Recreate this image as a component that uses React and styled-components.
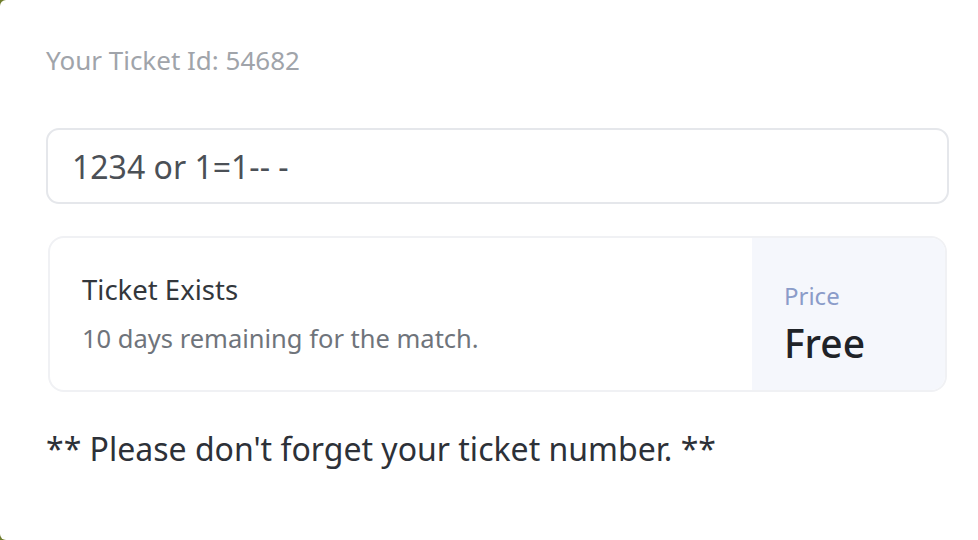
import React from "react";
import styled, { createGlobalStyle } from "styled-components";

const GlobalStyle = createGlobalStyle`
  html, body {
    margin: 0;
    padding: 0;
    background: #6f7d2c;
  }
  body {
    font-family: "Noto Sans", "Open Sans", sans-serif;
  }
`;

const Page = styled.div`
  width: 978px;
  height: 540px;
  background: #ffffff;
  border-radius: 6px 0 0 6px;
  box-sizing: border-box;
  padding: 43px 29px 0 46px;
  display: flex;
  flex-direction: column;
`;

const TicketLabel = styled.div`
  font-size: 26px;
  line-height: 34px;
  color: #a0a4aa;
`;

const TicketInput = styled.input`
  margin-top: 51px;
  width: 100%;
  height: 76px;
  box-sizing: border-box;
  border: 2px solid #e5e7eb;
  border-radius: 13px;
  padding: 0 24px;
  font-family: inherit;
  font-size: 32px;
  color: #4b5056;
  background: #fff;
  outline: none;
`;

const ResultCard = styled.div`
  margin: 32px 2px 0 2px;
  height: 156px;
  box-sizing: border-box;
  border: 2px solid #f0f1f4;
  border-radius: 16px;
  overflow: hidden;
  display: flex;
`;

const Info = styled.div`
  flex: 1;
  padding: 34px 32px 0;
  display: flex;
  flex-direction: column;
  gap: 13px;
`;

const Title = styled.div`
  font-size: 27.5px;
  line-height: 36px;
  color: #33373c;
`;

const Subtitle = styled.div`
  font-size: 25.5px;
  line-height: 34px;
  color: #6f747b;
`;

const PriceBox = styled.div`
  width: 193px;
  background: #f5f7fc;
  padding: 42px 32px 0;
  box-sizing: border-box;
  display: flex;
  flex-direction: column;
  gap: 7px;
`;

const PriceLabel = styled.div`
  font-size: 24px;
  line-height: 32px;
  color: #8b9cc9;
`;

const PriceValue = styled.div`
  font-size: 39px;
  line-height: 48px;
  font-weight: 500;
  color: #1f2328;
`;

const Note = styled.p`
  margin: 36px 0 0 0;
  font-size: 32px;
  line-height: 42px;
  color: #2d3138;
`;

export default function App() {
  return (
    <>
      <GlobalStyle />
      <Page>
        <TicketLabel>Your Ticket Id: 54682</TicketLabel>
        <TicketInput defaultValue="1234 or 1=1-- -" />
        <ResultCard>
          <Info>
            <Title>Ticket Exists</Title>
            <Subtitle>10 days remaining for the match.</Subtitle>
          </Info>
          <PriceBox>
            <PriceLabel>Price</PriceLabel>
            <PriceValue>Free</PriceValue>
          </PriceBox>
        </ResultCard>
        <Note>** Please don't forget your ticket number. **</Note>
      </Page>
    </>
  );
}
